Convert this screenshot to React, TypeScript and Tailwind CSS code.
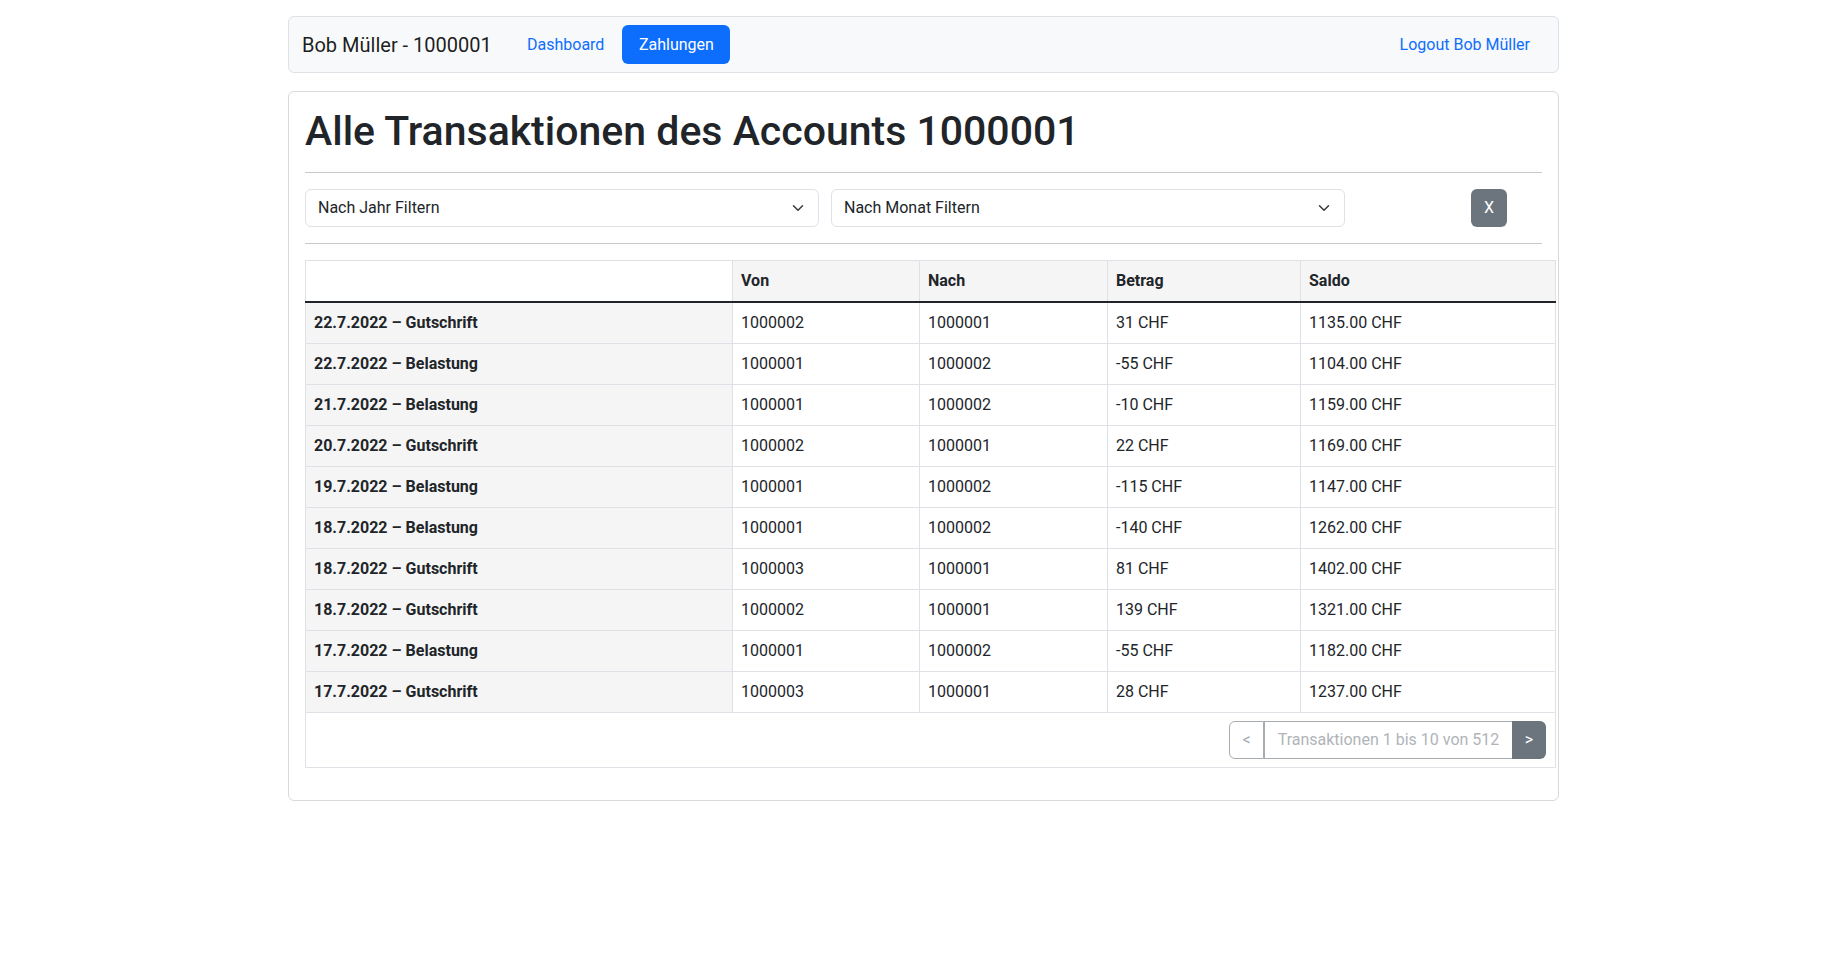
import React from 'react';

type Tx = {
  date: string;
  kind: 'Gutschrift' | 'Belastung';
  von: string;
  nach: string;
  betrag: string;
  saldo: string;
};

const transactions: Tx[] = [
  { date: '22.7.2022', kind: 'Gutschrift', von: '1000002', nach: '1000001', betrag: '31 CHF', saldo: '1135.00 CHF' },
  { date: '22.7.2022', kind: 'Belastung', von: '1000001', nach: '1000002', betrag: '-55 CHF', saldo: '1104.00 CHF' },
  { date: '21.7.2022', kind: 'Belastung', von: '1000001', nach: '1000002', betrag: '-10 CHF', saldo: '1159.00 CHF' },
  { date: '20.7.2022', kind: 'Gutschrift', von: '1000002', nach: '1000001', betrag: '22 CHF', saldo: '1169.00 CHF' },
  { date: '19.7.2022', kind: 'Belastung', von: '1000001', nach: '1000002', betrag: '-115 CHF', saldo: '1147.00 CHF' },
  { date: '18.7.2022', kind: 'Belastung', von: '1000001', nach: '1000002', betrag: '-140 CHF', saldo: '1262.00 CHF' },
  { date: '18.7.2022', kind: 'Gutschrift', von: '1000003', nach: '1000001', betrag: '81 CHF', saldo: '1402.00 CHF' },
  { date: '18.7.2022', kind: 'Gutschrift', von: '1000002', nach: '1000001', betrag: '139 CHF', saldo: '1321.00 CHF' },
  { date: '17.7.2022', kind: 'Belastung', von: '1000001', nach: '1000002', betrag: '-55 CHF', saldo: '1182.00 CHF' },
  { date: '17.7.2022', kind: 'Gutschrift', von: '1000003', nach: '1000001', betrag: '28 CHF', saldo: '1237.00 CHF' },
];

function Chevron() {
  return (
    <svg width="16" height="12" viewBox="0 0 16 16" fill="none" className="shrink-0">
      <path d="m2 5 6 6 6-6" stroke="#343a40" strokeWidth="2" strokeLinecap="round" strokeLinejoin="round" />
    </svg>
  );
}

function FilterSelect({ label }: { label: string }) {
  return (
    <div className="flex h-[38px] items-center justify-between rounded-md border border-[#dee2e6] bg-white pl-3 pr-3 text-[#212529]">
      <span>{label}</span>
      <Chevron />
    </div>
  );
}

export default function App() {
  return (
    <div className="min-h-screen bg-white pt-4 font-['Roboto',sans-serif] text-base leading-6 text-[#212529]">
      {/* Navbar */}
      <nav className="ml-[288px] flex h-[57px] w-[1271px] items-center rounded-md border border-[#dee2e6] bg-[#f8f9fa] pl-[13px] pr-[20px]">
        <span className="w-[217px] text-xl text-black/90">Bob Müller - 1000001</span>
        <a className="px-2 text-[#0d6efd]">Dashboard</a>
        <a className="ml-[10px] flex h-[39px] w-[108px] items-center justify-center rounded-md bg-[#0d6efd] text-white">
          Zahlungen
        </a>
        <a className="ml-auto px-2 text-[#0d6efd]">Logout Bob Müller</a>
      </nav>

      {/* Main card */}
      <div className="ml-[288px] mt-[18px] w-[1271px] rounded-md border border-black/15 p-4">
        <h1 className="h-12 text-[41px] font-medium leading-[47px] text-[#212529]">
          Alle Transaktionen des Accounts 1000001
        </h1>
        <hr className="my-4 border-t border-[#212529]/25" />

        <div className="grid grid-cols-[514px_514px_1fr] gap-3">
          <FilterSelect label="Nach Jahr Filtern" />
          <FilterSelect label="Nach Monat Filtern" />
          <div className="flex justify-end pr-[35px]">
            <button className="h-[38px] w-[36px] rounded-md bg-[#6c757d] text-white">X</button>
          </div>
        </div>
        <hr className="my-4 border-t border-[#212529]/25" />

        {/* Transactions table */}
        <table className="mb-4 w-[1250px] table-fixed border-collapse border border-[#dee2e6]">
          <colgroup>
            <col className="w-[427px]" />
            <col className="w-[187px]" />
            <col className="w-[188px]" />
            <col className="w-[193px]" />
            <col className="w-[255px]" />
          </colgroup>
          <thead>
            <tr>
              <th className="border border-[#dee2e6] border-b-2 border-b-[#212529] bg-white px-2 py-2"></th>
              <th className="border border-[#dee2e6] border-b-2 border-b-[#212529] bg-[#f5f5f5] px-2 py-2 text-left font-bold">Von</th>
              <th className="border border-[#dee2e6] border-b-2 border-b-[#212529] bg-[#f5f5f5] px-2 py-2 text-left font-bold">Nach</th>
              <th className="border border-[#dee2e6] border-b-2 border-b-[#212529] bg-[#f5f5f5] px-2 py-2 text-left font-bold">Betrag</th>
              <th className="border border-[#dee2e6] border-b-2 border-b-[#212529] bg-[#f5f5f5] px-2 py-2 text-left font-bold">Saldo</th>
            </tr>
          </thead>
          <tbody>
            {transactions.map((tx, i) => (
              <tr key={i}>
                <th className="border border-[#dee2e6] bg-[#f5f5f5] px-2 py-2 text-left font-bold">
                  {tx.date} – {tx.kind}
                </th>
                <td className="border border-[#dee2e6] px-2 py-2">{tx.von}</td>
                <td className="border border-[#dee2e6] px-2 py-2">{tx.nach}</td>
                <td className="border border-[#dee2e6] px-2 py-2">{tx.betrag}</td>
                <td className="border border-[#dee2e6] px-2 py-2">{tx.saldo}</td>
              </tr>
            ))}
          </tbody>
          <tfoot>
            <tr>
              <td colSpan={5} className="border border-[#dee2e6] py-2 pl-2 pr-[9px]">
                <div className="flex justify-end">
                  <div className="flex h-[38px]">
                    <button className="w-[35px] rounded-l-md border border-[#a7acb1] text-[#a7acb1]">&lt;</button>
                    <span className="flex w-[248px] items-center justify-center border-y border-l border-[#a7acb1] text-[#b0b4b8]">
                      Transaktionen 1 bis 10 von 512
                    </span>
                    <button className="w-[34px] rounded-r-md bg-[#6c757d] text-white">&gt;</button>
                  </div>
                </div>
              </td>
            </tr>
          </tfoot>
        </table>
      </div>
    </div>
  );
}
